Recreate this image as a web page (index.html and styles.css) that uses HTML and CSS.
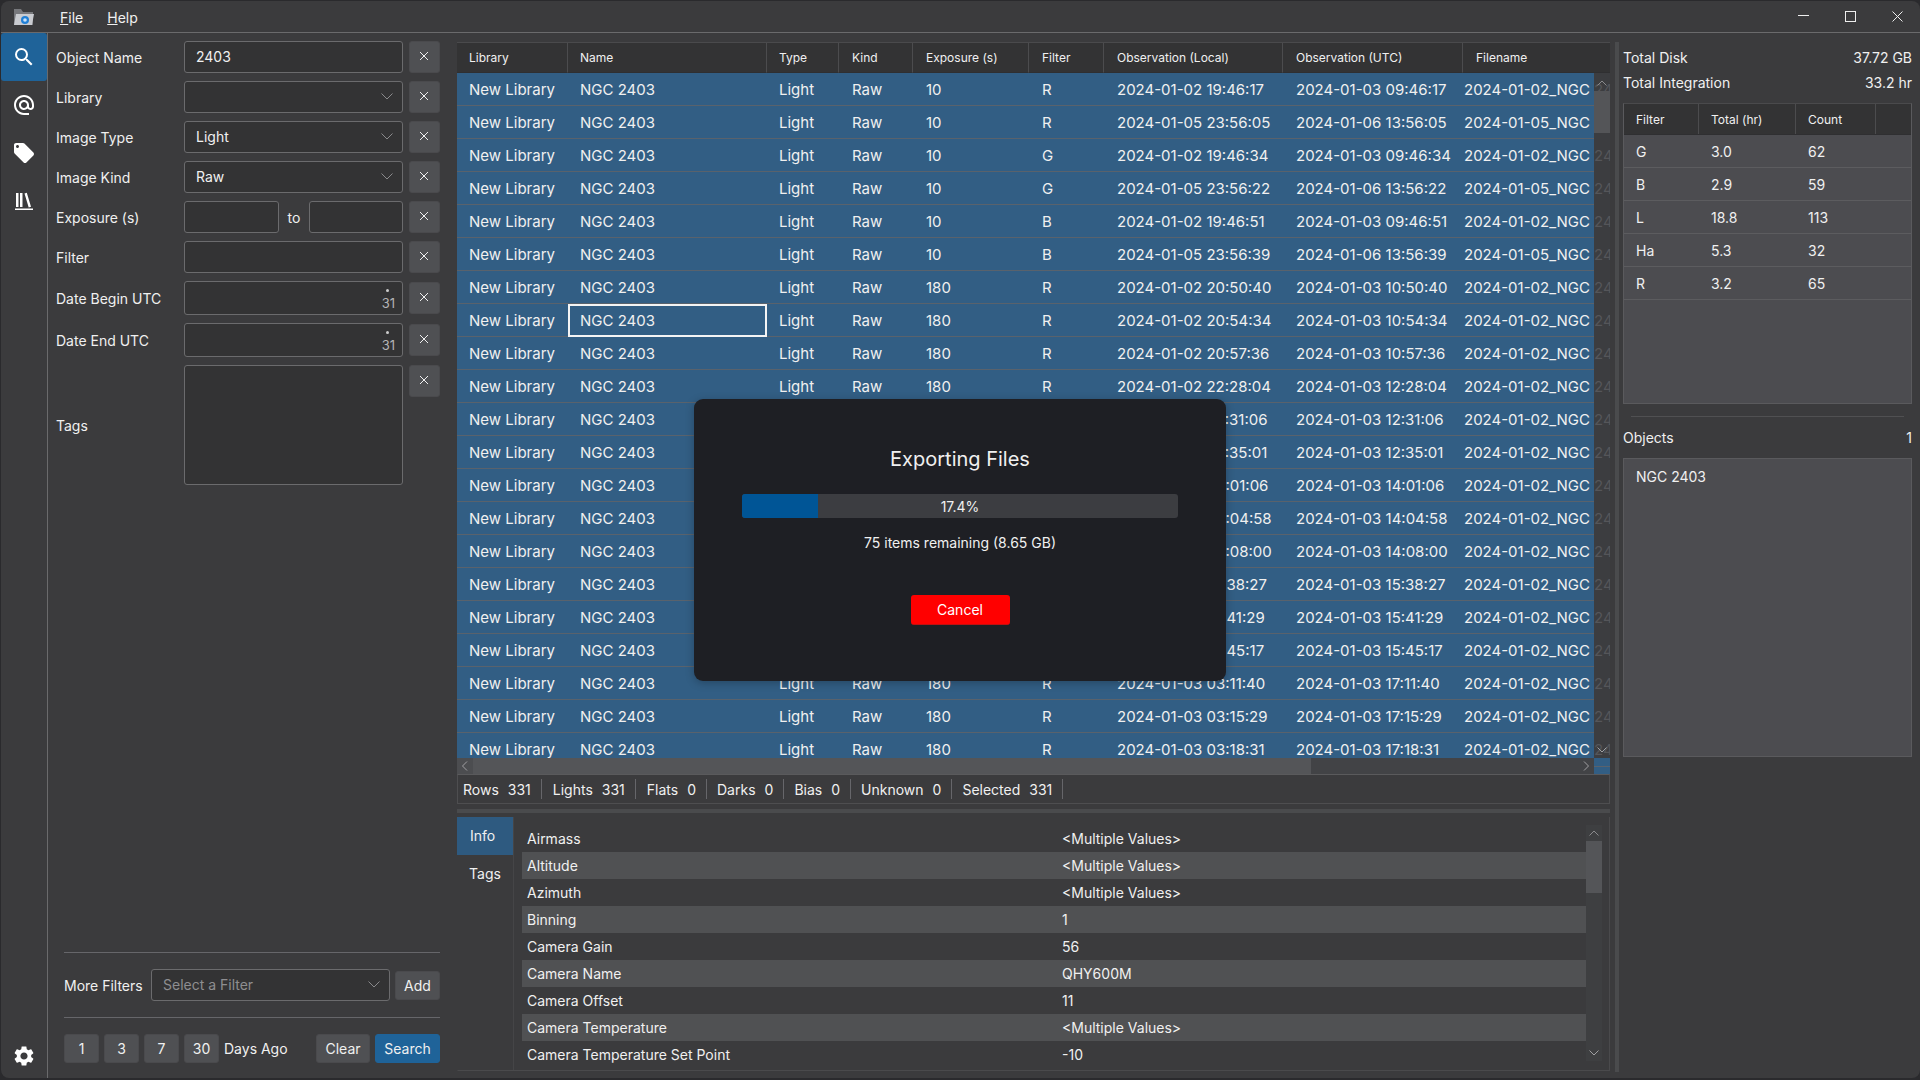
FILE: index.html
```html
<!DOCTYPE html>
<html lang="en">
<head>
<meta charset="utf-8">
<title>Exporting Files</title>
<link rel="stylesheet" href="styles.css">
</head>
<body>
<div class="window">
  <header class="titlebar">
    <svg class="appicon" viewBox="0 0 24 20" width="24" height="20"><path d="M2 2h7l2 3h10v13H2z" fill="#77787c"/><path d="M4 7h18l-2 11H2z" fill="#c9cbd0"/><circle cx="13" cy="13" r="4" fill="#1f7fd6"/><circle cx="13" cy="13" r="1.8" fill="#c9e2fa"/></svg>
    <nav class="menu"><span><u>F</u>ile</span><span><u>H</u>elp</span></nav>
    <div class="winctl">
      <svg width="12" height="12" viewBox="0 0 12 12"><path d="M0 4.500h11" stroke="#eee" stroke-width="1"/></svg>
      <svg width="12" height="12" viewBox="0 0 12 12"><rect x=".5" y=".5" width="10" height="10" fill="none" stroke="#eee"/></svg>
      <svg width="12" height="12" viewBox="0 0 12 12"><path d="M.5.5l10 10M10.500.5l-10 10" stroke="#eee" fill="none"/></svg>
    </div>
  </header>
  <div class="main">
    <aside class="sidebar">
      <div class="navbtn active"><svg viewBox="0 0 24 24" width="24" height="24"><path fill="#fff" d="M15.500 14h-.79l-.28-.27A6.471 6.471 0 0 0 16 9.500 6.500 6.500 0 1 0 9.500 16c1.610 0 3.090-.59 4.230-1.570l.27.28v.79l5 4.990L20.490 19l-4.990-5zm-6 0C7.010 14 5 11.990 5 9.500S7.010 5 9.500 5 14 7.010 14 9.500 11.990 14 9.500 14z"/></svg></div>
      <div class="navbtn"><svg viewBox="0 0 24 24" width="24" height="24"><path fill="#fff" d="M12 2C6.480 2 2 6.480 2 12s4.480 10 10 10h5v-2h-5c-4.340 0-8-3.660-8-8s3.660-8 8-8 8 3.660 8 8v1.430c0 .79-.71 1.570-1.500 1.570s-1.500-.78-1.500-1.570V12c0-2.760-2.240-5-5-5s-5 2.240-5 5 2.240 5 5 5c1.380 0 2.640-.56 3.540-1.470.65.89 1.770 1.470 2.960 1.470 1.970 0 3.500-1.600 3.500-3.570V12c0-5.520-4.480-10-10-10zm0 13c-1.660 0-3-1.340-3-3s1.340-3 3-3 3 1.340 3 3-1.340 3-3 3z"/></svg></div>
      <div class="navbtn"><svg viewBox="0 0 24 24" width="24" height="24"><path fill="#fff" d="M21.410 11.580l-9-9C12.050 2.220 11.550 2 11 2H4c-1.100 0-2 .9-2 2v7c0 .55.22 1.050.59 1.420l9 9c.36.36.86.58 1.410.58.55 0 1.050-.22 1.410-.59l7-7c.37-.36.59-.86.59-1.410 0-.55-.23-1.060-.59-1.420zM5.500 7C4.670 7 4 6.330 4 5.500S4.670 4 5.500 4 7 4.670 7 5.500 6.330 7 5.500 7z"/></svg></div>
      <div class="navbtn"><svg viewBox="0 0 20 20" width="20" height="20"><path fill="#fff" d="M2 2h2.500v14H2zM6 2h2.500v14H6zM10.500 2.500l2.300-.8 4.200 14-2.300.7zM1 17.500h18V19H1z"/></svg></div>
      <div class="navbtn gear"><svg viewBox="0 0 24 24" width="24" height="24"><path fill="#fff" d="M19.140 12.940c.04-.3.06-.61.06-.94 0-.32-.02-.64-.07-.94l2.030-1.580c.18-.14.23-.41.12-.61l-1.920-3.320c-.12-.22-.37-.29-.59-.22l-2.390.96c-.5-.38-1.030-.7-1.620-.94l-.36-2.540c-.04-.24-.24-.41-.48-.41h-3.840c-.24 0-.43.17-.47.41l-.36 2.540c-.59.24-1.130.57-1.620.94l-2.390-.96c-.22-.08-.47 0-.59.22L2.740 8.870c-.12.21-.08.47.12.61l2.030 1.580c-.05.3-.09.63-.09.94s.02.64.07.94l-2.030 1.580c-.18.14-.23.41-.12.61l1.920 3.320c.12.22.37.29.59.22l2.390-.96c.5.38 1.030.7 1.620.94l.36 2.540c.05.24.24.41.48.41h3.840c.24 0 .44-.17.47-.41l.36-2.540c.59-.24 1.130-.56 1.620-.94l2.390.96c.22.08.47 0 .59-.22l1.920-3.320c.12-.22.07-.47-.12-.61l-2.010-1.580zM12 15.600c-1.980 0-3.600-1.620-3.600-3.600s1.620-3.600 3.600-3.600 3.600 1.620 3.600 3.600-1.620 3.600-3.600 3.600z"/></svg></div>
    </aside>

    <section class="filters">
      <div class="form">
        <label>Object Name</label><div class="field">2403</div><button class="x"><svg viewBox="0 0 10 10" width="10" height="10"><path d="M1 1l8 8M9 1l-8 8" stroke="#f0f0f0"/></svg></button>
        <label>Library</label><div class="field select"><span></span><svg class="chev" viewBox="0 0 12 7"><path d="M.5.5L6 6l5.500-5.500" fill="none" stroke="#8a8a8c"/></svg></div><button class="x"><svg viewBox="0 0 10 10" width="10" height="10"><path d="M1 1l8 8M9 1l-8 8" stroke="#f0f0f0"/></svg></button>
        <label>Image Type</label><div class="field select"><span>Light</span><svg class="chev" viewBox="0 0 12 7"><path d="M.5.5L6 6l5.500-5.500" fill="none" stroke="#8a8a8c"/></svg></div><button class="x"><svg viewBox="0 0 10 10" width="10" height="10"><path d="M1 1l8 8M9 1l-8 8" stroke="#f0f0f0"/></svg></button>
        <label>Image Kind</label><div class="field select"><span>Raw</span><svg class="chev" viewBox="0 0 12 7"><path d="M.5.5L6 6l5.500-5.500" fill="none" stroke="#8a8a8c"/></svg></div><button class="x"><svg viewBox="0 0 10 10" width="10" height="10"><path d="M1 1l8 8M9 1l-8 8" stroke="#f0f0f0"/></svg></button>
        <label>Exposure (s)</label><div class="range"><div class="field"></div><span>to</span><div class="field"></div></div><button class="x"><svg viewBox="0 0 10 10" width="10" height="10"><path d="M1 1l8 8M9 1l-8 8" stroke="#f0f0f0"/></svg></button>
        <label>Filter</label><div class="field"></div><button class="x"><svg viewBox="0 0 10 10" width="10" height="10"><path d="M1 1l8 8M9 1l-8 8" stroke="#f0f0f0"/></svg></button>
        <label>Date Begin UTC</label><div class="field date"><span class="cal"><i></i>31</span></div><button class="x"><svg viewBox="0 0 10 10" width="10" height="10"><path d="M1 1l8 8M9 1l-8 8" stroke="#f0f0f0"/></svg></button>
        <label>Date End UTC</label><div class="field date"><span class="cal"><i></i>31</span></div><button class="x"><svg viewBox="0 0 10 10" width="10" height="10"><path d="M1 1l8 8M9 1l-8 8" stroke="#f0f0f0"/></svg></button>
        <label>Tags</label><div class="field"></div><button class="x top"><svg viewBox="0 0 10 10" width="10" height="10"><path d="M1 1l8 8M9 1l-8 8" stroke="#f0f0f0"/></svg></button>
      </div>
      <div class="bottom">
        <div class="more">
          <label>More Filters</label>
          <div class="field select ph"><span>Select a Filter</span><svg class="chev" viewBox="0 0 12 7"><path d="M.5.5L6 6l5.500-5.500" fill="none" stroke="#8a8a8c"/></svg></div>
          <button class="btn add">Add</button>
        </div>
        <div class="days">
          <button class="btn day">1</button><button class="btn day">3</button><button class="btn day">7</button><button class="btn day">30</button>
          <span class="ago">Days Ago</span>
          <button class="btn clear">Clear</button><button class="btn search">Search</button>
        </div>
      </div>
    </section>

    <section class="center">
      <div class="tablebox">
        <table class="grid">
          <colgroup><col class="c1"><col class="c2"><col class="c3"><col class="c4"><col class="c5"><col class="c6"><col class="c7"><col class="c8"><col class="c9"><col class="c10"></colgroup>
          <thead><tr><th>Library</th><th>Name</th><th>Type</th><th>Kind</th><th>Exposure (s)</th><th>Filter</th><th>Observation (Local)</th><th>Observation (UTC)</th><th class="fnh" colspan="2">Filename</th></tr></thead>
          <tbody>
            <tr><td>New Library</td><td>NGC 2403</td><td>Light</td><td>Raw</td><td>10</td><td>R</td><td>2024-01-02 19:46:17</td><td>2024-01-03 09:46:17</td><td class="fn">2024-01-02_NGC</td><td class="ghost">24</td></tr>
            <tr><td>New Library</td><td>NGC 2403</td><td>Light</td><td>Raw</td><td>10</td><td>R</td><td>2024-01-05 23:56:05</td><td>2024-01-06 13:56:05</td><td class="fn">2024-01-05_NGC</td><td class="ghost">24</td></tr>
            <tr><td>New Library</td><td>NGC 2403</td><td>Light</td><td>Raw</td><td>10</td><td>G</td><td>2024-01-02 19:46:34</td><td>2024-01-03 09:46:34</td><td class="fn">2024-01-02_NGC</td><td class="ghost">24</td></tr>
            <tr><td>New Library</td><td>NGC 2403</td><td>Light</td><td>Raw</td><td>10</td><td>G</td><td>2024-01-05 23:56:22</td><td>2024-01-06 13:56:22</td><td class="fn">2024-01-05_NGC</td><td class="ghost">24</td></tr>
            <tr><td>New Library</td><td>NGC 2403</td><td>Light</td><td>Raw</td><td>10</td><td>B</td><td>2024-01-02 19:46:51</td><td>2024-01-03 09:46:51</td><td class="fn">2024-01-02_NGC</td><td class="ghost">24</td></tr>
            <tr><td>New Library</td><td>NGC 2403</td><td>Light</td><td>Raw</td><td>10</td><td>B</td><td>2024-01-05 23:56:39</td><td>2024-01-06 13:56:39</td><td class="fn">2024-01-05_NGC</td><td class="ghost">24</td></tr>
            <tr><td>New Library</td><td>NGC 2403</td><td>Light</td><td>Raw</td><td>180</td><td>R</td><td>2024-01-02 20:50:40</td><td>2024-01-03 10:50:40</td><td class="fn">2024-01-02_NGC</td><td class="ghost">24</td></tr>
            <tr><td>New Library</td><td class="current">NGC 2403</td><td>Light</td><td>Raw</td><td>180</td><td>R</td><td>2024-01-02 20:54:34</td><td>2024-01-03 10:54:34</td><td class="fn">2024-01-02_NGC</td><td class="ghost">24</td></tr>
            <tr><td>New Library</td><td>NGC 2403</td><td>Light</td><td>Raw</td><td>180</td><td>R</td><td>2024-01-02 20:57:36</td><td>2024-01-03 10:57:36</td><td class="fn">2024-01-02_NGC</td><td class="ghost">24</td></tr>
            <tr><td>New Library</td><td>NGC 2403</td><td>Light</td><td>Raw</td><td>180</td><td>R</td><td>2024-01-02 22:28:04</td><td>2024-01-03 12:28:04</td><td class="fn">2024-01-02_NGC</td><td class="ghost">24</td></tr>
            <tr><td>New Library</td><td>NGC 2403</td><td>Light</td><td>Raw</td><td>180</td><td>R</td><td>2024-01-02 22:31:06</td><td>2024-01-03 12:31:06</td><td class="fn">2024-01-02_NGC</td><td class="ghost">24</td></tr>
            <tr><td>New Library</td><td>NGC 2403</td><td>Light</td><td>Raw</td><td>180</td><td>R</td><td>2024-01-02 22:35:01</td><td>2024-01-03 12:35:01</td><td class="fn">2024-01-02_NGC</td><td class="ghost">24</td></tr>
            <tr><td>New Library</td><td>NGC 2403</td><td>Light</td><td>Raw</td><td>180</td><td>R</td><td>2024-01-03 00:01:06</td><td>2024-01-03 14:01:06</td><td class="fn">2024-01-02_NGC</td><td class="ghost">24</td></tr>
            <tr><td>New Library</td><td>NGC 2403</td><td>Light</td><td>Raw</td><td>180</td><td>R</td><td>2024-01-03 00:04:58</td><td>2024-01-03 14:04:58</td><td class="fn">2024-01-02_NGC</td><td class="ghost">24</td></tr>
            <tr><td>New Library</td><td>NGC 2403</td><td>Light</td><td>Raw</td><td>180</td><td>R</td><td>2024-01-03 00:08:00</td><td>2024-01-03 14:08:00</td><td class="fn">2024-01-02_NGC</td><td class="ghost">24</td></tr>
            <tr><td>New Library</td><td>NGC 2403</td><td>Light</td><td>Raw</td><td>180</td><td>R</td><td>2024-01-03 01:38:27</td><td>2024-01-03 15:38:27</td><td class="fn">2024-01-02_NGC</td><td class="ghost">24</td></tr>
            <tr><td>New Library</td><td>NGC 2403</td><td>Light</td><td>Raw</td><td>180</td><td>R</td><td>2024-01-03 01:41:29</td><td>2024-01-03 15:41:29</td><td class="fn">2024-01-02_NGC</td><td class="ghost">24</td></tr>
            <tr><td>New Library</td><td>NGC 2403</td><td>Light</td><td>Raw</td><td>180</td><td>R</td><td>2024-01-03 01:45:17</td><td>2024-01-03 15:45:17</td><td class="fn">2024-01-02_NGC</td><td class="ghost">24</td></tr>
            <tr><td>New Library</td><td>NGC 2403</td><td>Light</td><td>Raw</td><td>180</td><td>R</td><td>2024-01-03 03:11:40</td><td>2024-01-03 17:11:40</td><td class="fn">2024-01-02_NGC</td><td class="ghost">24</td></tr>
            <tr><td>New Library</td><td>NGC 2403</td><td>Light</td><td>Raw</td><td>180</td><td>R</td><td>2024-01-03 03:15:29</td><td>2024-01-03 17:15:29</td><td class="fn">2024-01-02_NGC</td><td class="ghost">24</td></tr>
            <tr><td>New Library</td><td>NGC 2403</td><td>Light</td><td>Raw</td><td>180</td><td>R</td><td>2024-01-03 03:18:31</td><td>2024-01-03 17:18:31</td><td class="fn">2024-01-02_NGC</td><td class="ghost">24</td></tr>
          </tbody>
        </table>
        <div class="vbar-up"><svg viewBox="0 0 10 6" width="10" height="6"><path d="M.5 5.500L5 1l4.500 4.500" fill="none" stroke="#8a8a8c"/></svg></div>
        <div class="vbar-thumb"></div>
        <div class="vbar-down"><svg viewBox="0 0 10 6" width="10" height="6"><path d="M.5.5L5 5l4.500-4.500" fill="none" stroke="#a0a0a2"/></svg></div>
      </div>
      <div class="hbar">
        <div class="harrow"><svg viewBox="0 0 6 10" width="6" height="10"><path d="M5 .5L.5 5 5 9.500" fill="none" stroke="#a0a0a2"/></svg></div>
        <div class="hthumb"></div>
        <div class="htrack"><svg viewBox="0 0 6 10" width="6" height="10"><path d="M1 .5L5.500 5 1 9.500" fill="none" stroke="#a0a0a2"/></svg></div>
        <div class="hcorner"></div>
      </div>
      <div class="status">
        <div class="stat"><span>Rows</span><span>331</span></div>
        <div class="stat"><span>Lights</span><span>331</span></div>
        <div class="stat"><span>Flats</span><span>0</span></div>
        <div class="stat"><span>Darks</span><span>0</span></div>
        <div class="stat"><span>Bias</span><span>0</span></div>
        <div class="stat"><span>Unknown</span><span>0</span></div>
        <div class="stat"><span>Selected</span><span>331</span></div>
      </div>
      <div class="hsplit"></div>
      <div class="info">
        <div class="tabs"><div class="tab on">Info</div><div class="tab">Tags</div></div>
        <div class="props">
          <div class="prop"><span>Airmass</span><span>&lt;Multiple Values&gt;</span></div>
          <div class="prop"><span>Altitude</span><span>&lt;Multiple Values&gt;</span></div>
          <div class="prop"><span>Azimuth</span><span>&lt;Multiple Values&gt;</span></div>
          <div class="prop"><span>Binning</span><span>1</span></div>
          <div class="prop"><span>Camera Gain</span><span>56</span></div>
          <div class="prop"><span>Camera Name</span><span>QHY600M</span></div>
          <div class="prop"><span>Camera Offset</span><span>11</span></div>
          <div class="prop"><span>Camera Temperature</span><span>&lt;Multiple Values&gt;</span></div>
          <div class="prop"><span>Camera Temperature Set Point</span><span>-10</span></div>
        </div>
        <div class="pbar">
          <div class="pbtn"><svg viewBox="0 0 10 6" width="10" height="6"><path d="M.5 5.500L5 1l4.500 4.500" fill="none" stroke="#8a8a8c"/></svg></div>
          <div class="pthumb"></div>
          <div class="ptrack"></div>
          <div class="pbtn"><svg viewBox="0 0 10 6" width="10" height="6"><path d="M.5.5L5 5l4.500-4.500" fill="none" stroke="#a0a0a2"/></svg></div>
        </div>
      </div>
    </section>

    <div class="vsplit"></div>

    <section class="summary">
      <div class="kv"><span>Total Disk</span><span>37.72 GB</span></div>
      <div class="kv"><span>Total Integration</span><span>33.2 hr</span></div>
      <div class="sumbox">
        <div class="srow shead"><span>Filter</span><span>Total (hr)</span><span>Count</span><span></span></div>
        <div class="srow"><span>G</span><span>3.0</span><span>62</span><span></span></div>
        <div class="srow"><span>B</span><span>2.9</span><span>59</span><span></span></div>
        <div class="srow"><span>L</span><span>18.8</span><span>113</span><span></span></div>
        <div class="srow"><span>Ha</span><span>5.3</span><span>32</span><span></span></div>
        <div class="srow"><span>R</span><span>3.2</span><span>65</span><span></span></div>
      </div>
      <hr class="rule">
      <div class="kv objects"><span>Objects</span><span>1</span></div>
      <div class="objlist"><div>NGC 2403</div></div>
    </section>
  </div>

  <div class="modal">
    <h2>Exporting Files</h2>
    <div class="progress"><div class="fill"></div><span>17.4%</span></div>
    <p>75 items remaining (8.65 GB)</p>
    <button class="cancel">Cancel</button>
  </div>
</div>
</body>
</html>
```
FILE: styles.css
```css
* { box-sizing: border-box; }
html, body { margin: 0; height: 100%; }
body {
  background: #2a2a2d;
  font-family: Inter, "Noto Sans", sans-serif;
  font-size: 14px;
  color: #f0f0f0;
  overflow: hidden;
}
.window {
  position: relative;
  width: 1919px;
  height: 1077px;
  margin: 1px 0 0 1px;
  background: #3b3b3d;
  border-radius: 8px;
  overflow: hidden;
  display: flex;
  flex-direction: column;
}
.titlebar {
  height: 32px;
  flex: none;
  display: flex;
  align-items: center;
  border-bottom: 1px solid #6a6a6c;
  padding-left: 11px;
}
.appicon { flex: none; }
.menu { display: flex; gap: 24px; margin-left: 24px; margin-top: 2px; }
.winctl {
  margin-left: auto;
  display: flex;
  gap: 35px;
  padding-right: 16px;
}
.main { flex: 1; display: flex; min-height: 0; }

.sidebar {
  width: 47px;
  flex: none;
  border-right: 1px solid #6a6a6c;
  display: flex;
  flex-direction: column;
}
.navbtn {
  width: 46px;
  height: 48px;
  display: flex;
  align-items: center;
  justify-content: center;
}
.navbtn.active { background: #1f6399; border-radius: 3px; }
.gear { margin-top: auto; height: 24px; margin-bottom: 10px; }

.filters {
  width: 409px;
  flex: none;
  display: flex;
  flex-direction: column;
  padding: 8px 17px 15px 8px;
}
.form {
  display: grid;
  grid-template-columns: 128px 219px 31px;
  grid-template-rows: 32px 32px 32px 32px 32px 32px 34px 34px 120px;
  row-gap: 8px;
  align-items: center;
}
.form .x { margin-left: 6px; }
.form label { display: block; margin-top: 1px; }
.field {
  height: 32px;
  background: #333334;
  border: 1px solid #6b6b6d;
  border-radius: 3px;
  padding: 0 11px 1px;
  display: flex;
  align-items: center;
  color: #f0f0f0;
}
.form > .field:last-of-type { height: 120px; }
.select { justify-content: space-between; padding-right: 9px; }
.chev { width: 12px; height: 7px; flex: none; }
.range { display: flex; align-items: center; justify-content: space-between; }
.range .field { width: 95px; }
.range .field:last-child { width: 94px; }
.date { height: 34px; justify-content: flex-end; padding: 0 7px; }
.cal {
  display: flex;
  flex-direction: column;
  align-items: center;
  font-size: 13px;
  line-height: 14px;
  margin-top: 3px;
  color: #b4b4b6;
}
.cal i { width: 3px; height: 3px; border-radius: 50%; background: #ccc; margin-bottom: 4px; margin-left: -2px; }
.x {
  width: 31px;
  height: 32px;
  padding: 0 1px 2px 0;
  background: #4f5053;
  border: 1px solid #4a4a4d;
  border-radius: 3px;
  display: flex;
  align-items: center;
  justify-content: center;
}
.x.top { align-self: start; }

.bottom { margin-top: auto; padding-left: 8px; }
.more {
  border-top: 1px solid #66666a;
  border-bottom: 1px solid #66666a;
  height: 66px;
  display: flex;
  align-items: center;
  gap: 5px;
}
.more label { width: 82px; flex: none; margin-top: 1px; white-space: nowrap; }
.more .field { width: 239px; }
.ph { color: #8e8e90; }
.btn {
  height: 29px;
  padding: 0;
  background: #4f5053;
  border: 1px solid #4a4a4d;
  border-radius: 3px;
  color: #f0f0f0;
  font: inherit;
}
.add { width: 45px; }
.days {
  display: flex;
  align-items: center;
  margin-top: 16px;
  gap: 5px;
}
.day { width: 35px; }
.ago { flex: 1; }
.clear { width: 54px; }
.search { width: 65px; background: #1f6399; border-color: #1f6399; }

.center {
  width: 1153px;
  flex: none;
  display: flex;
  flex-direction: column;
  padding-top: 9px;
  position: relative;
}
.tablebox {
  position: relative;
  height: 716px;
  flex: none;
  overflow: hidden;
  border-top: 1px solid #4a4a4c;
}
.grid {
  width: 1153px;
  table-layout: fixed;
  border-collapse: separate;
  border-spacing: 0;
}
.c1 { width: 111px; } .c2 { width: 199px; } .c3 { width: 72px; } .c4 { width: 74px; } .c5 { width: 116px; }
.c6 { width: 75px; } .c7 { width: 179px; } .c8 { width: 180px; } .c9 { width: 131px; } .c10 { width: 16px; }
.grid th {
  height: 30px;
  font-size: 12px;
  font-weight: 400;
  text-align: left;
  padding: 0 0 0 12px;
  background: #333334;
  border-right: 1px solid #4c4c4e;
  border-bottom: 1px solid #2f2f31;
}
.grid th:last-child { border-right: 0; padding-left: 13px; }
.grid td {
  height: 33px;
  padding: 0 0 0 13px;
  font-size: 15px;
  white-space: nowrap;
  overflow: hidden;
  background: #325e84;
  border-bottom: 1px solid #59626c;
}
.grid td:nth-child(-n+3) { padding-left: 12px; }
.grid td:nth-child(n+4):nth-child(-n+8), .grid th:nth-child(n+4):nth-child(-n+8) { padding-left: 13px; }
.grid td.fn { padding-left: 1px; }
.grid td.ghost {
  background: #3c3d40;
  color: #55565a;
  padding-left: 0;
  border-bottom: 0;
}
.grid td.current { outline: 2px solid #f4f4f4; outline-offset: -2px; }
.vbar-up, .vbar-down, .vbar-thumb { position: absolute; right: 0; width: 16px; }
.vbar-up { top: 31px; height: 17px; display: flex; align-items: center; justify-content: center; }
.vbar-thumb { top: 48px; height: 42px; background: #545558; }
.vbar-down { bottom: 0; height: 17px; display: flex; align-items: center; justify-content: center; }

.hbar { height: 16px; flex: none; display: flex; background: #45464a; }
.harrow { width: 16px; display: flex; align-items: center; justify-content: center; background: #4c4d50; }
.hthumb { width: 838px; background: #545558; }
.htrack { flex: 1; display: flex; align-items: center; justify-content: flex-end; padding-right: 5px; background: #424346; }
.hcorner { width: 16px; background: linear-gradient(#325e84 8px, #59626c 8px, #59626c 9px, #325e84 9px); }

.status {
  height: 30px;
  flex: none;
  display: flex;
  align-items: center;
  border: 1px solid #4e4e50;
  border-top-color: #5a5a5c;
  padding-left: 5px;
}
.stat {
  display: flex;
  gap: 9px;
  padding-right: 10px;
  margin-right: 10px;
  border-right: 1px solid #66666a;
  height: 20px;
  align-items: center;
}
.stat:nth-child(-n+2) { margin-right: 11px; }
.hsplit { height: 4px; flex: none; margin-top: 5px; background: #4a4b4d; }
.info {
  margin-top: 4px;
  height: 254px;
  flex: none;
  display: flex;
  border: 1px solid #4a4a4c;
  border-top: 0;
  border-left: 1px solid #3b3b3d;
}
.tabs { width: 56px; flex: none; border-right: 1px solid #454547; }
.tab { height: 38px; display: flex; align-items: center; justify-content: center; margin-left: -1px; padding-bottom: 2px; }
.tab.on { background: #2e5a80; padding-right: 5px; }
.props { flex: 1; padding: 8px 0 0 8px; min-width: 0; }
.prop {
  height: 27px;
  display: grid;
  grid-template-columns: 535px 1fr;
  align-items: center;
  padding-left: 5px;
}
.prop:nth-child(even) { background: #505153; }
.pbar { width: 16px; flex: none; margin: 8px 7px 9px 0; display: flex; flex-direction: column; }
.pbtn { height: 16px; display: flex; align-items: center; justify-content: center; background: #3e3f41; }
.pthumb { height: 52px; background: #545558; }
.ptrack { flex: 1; background: #3e3f41; }

.vsplit { width: 4px; flex: none; margin-left: 5px; margin-top: 9px; margin-bottom: 6px; background: #4a4b4d; }
.summary {
  width: 289px;
  flex: none;
  margin-left: 4px;
  padding-top: 12px;
  display: flex;
  flex-direction: column;
}
.kv { display: flex; justify-content: space-between; height: 25px; align-items: center; }
.sumbox {
  margin-top: 8px;
  height: 301px;
  flex: none;
  background: #4c4c50;
  border: 1px solid #5a5a5d;
  border-top-color: #4a4a4c;
}
.srow {
  display: grid;
  grid-template-columns: 75px 97px 80px 1fr;
  height: 33px;
  align-items: center;
  border-bottom: 1px solid #5c5c5f;
}
.srow span { padding-left: 12px; }
.shead {
  height: 31px;
  background: #333334;
  font-size: 12px;
  border-bottom: 1px solid #2f2f31;
}
.shead span { height: 100%; display: flex; align-items: center; border-right: 1px solid #4c4c4e; }
.shead span:last-child { border-right: 0; }
.rule { margin: 12px 8px 0; border: 0; border-top: 1px solid #505052; width: 273px; }
.objects { margin-top: 8px; height: 24px; }
.objlist {
  margin-top: 9px;
  height: 299px;
  flex: none;
  background: #4c4c50;
  border: 1px solid #5a5a5d;
  padding: 9px 12px;
}

.modal {
  position: absolute;
  left: 693px;
  top: 398px;
  width: 532px;
  height: 282px;
  background: #1e1f24;
  border-radius: 9px;
  padding-top: 45px;
  display: flex;
  flex-direction: column;
  align-items: center;
  box-shadow: 0 2px 8px rgba(0,0,0,.25);
}
.modal h2 { margin: 0; height: 30px; line-height: 30px; font-size: 20px; font-weight: 400; }
.progress {
  position: relative;
  width: 436px;
  height: 24px;
  margin-top: 20px;
  background: #3c3d41;
  border-radius: 3px;
  overflow: hidden;
  display: flex;
  align-items: center;
  justify-content: center;
}
.fill { position: absolute; left: 0; top: 0; bottom: 0; width: 76px; background: #005596; }
.progress span { position: relative; padding-top: 1px; }
.modal p { margin: 14px 0 0; height: 22px; line-height: 22px; }
.cancel {
  margin-top: 41px;
  width: 99px;
  height: 30px;
  background: #ff0000;
  border: 0;
  border-bottom: 1px solid #c01010;
  border-radius: 3px;
  color: #fff;
  font: inherit;
}
```
